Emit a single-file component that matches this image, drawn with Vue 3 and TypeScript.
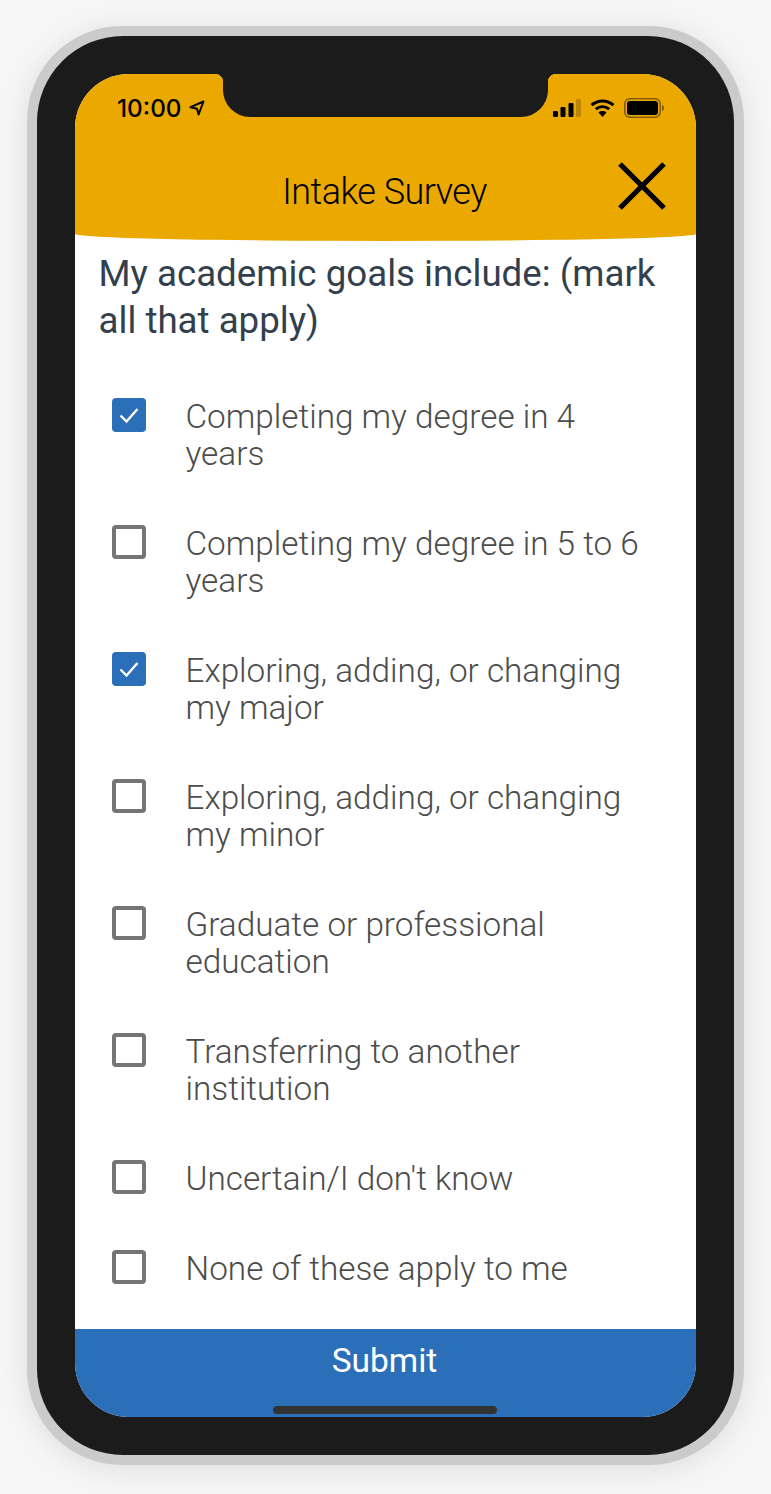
<script setup lang="ts">
interface Option { label: string; checked: boolean }
const options: Option[] = [
  { label: 'Completing my degree in 4 years', checked: true },
  { label: 'Completing my degree in 5 to 6 years', checked: false },
  { label: 'Exploring, adding, or changing my major', checked: true },
  { label: 'Exploring, adding, or changing my minor', checked: false },
  { label: 'Graduate or professional education', checked: false },
  { label: 'Transferring to another institution', checked: false },
  { label: "Uncertain/I don't know", checked: false },
  { label: 'None of these apply to me', checked: false },
]
</script>

<template>
  <div class="page">
    <div class="frame">
      <div class="bezel">
        <div class="screen">
          <header class="header">
            <div class="status">
              <div class="status-left">
                <span class="time">10:00</span>
                <svg class="loc" viewBox="0 0 16 16" width="16" height="16">
                  <path d="M1.5 7.2 14.5 1.5 9.6 14.5 8 8.8Z" fill="none" stroke="#000" stroke-width="2" stroke-linejoin="round" />
                </svg>
              </div>
              <div class="status-right">
                <svg viewBox="0 0 28 18" width="28" height="18">
                  <rect x="0" y="12" width="5" height="6" rx="1.2" fill="#000" />
                  <rect x="7.5" y="8" width="5" height="10" rx="1.2" fill="#000" />
                  <rect x="15.5" y="4" width="5" height="14" rx="1.2" fill="#000" />
                  <rect x="23" y="0" width="5" height="18" rx="1.2" fill="#000" opacity="0.2" />
                </svg>
                <svg viewBox="0 0 25 18" width="25" height="18">
                  <path d="M1.5 6.2C8 .6 17 .6 23.5 6.2" fill="none" stroke="#000" stroke-width="3" />
                  <path d="M5.8 10.2c4-3.4 9.400-3.400 13.400 0" fill="none" stroke="#000" stroke-width="3" />
                  <path d="M12.500 18 8.500 13.400c2.300-1.800 5.700-1.800 8 0Z" fill="#000" />
                </svg>
                <svg viewBox="0 0 40 20" width="40" height="20">
                  <rect x="0.800" y="0.800" width="35.400" height="18.400" rx="5" fill="none" stroke="#000" stroke-opacity="0.45" stroke-width="1.600" />
                  <rect x="3" y="3" width="31" height="14" rx="3" fill="#000" />
                  <path d="M38 7c1.500.5 2 1.800 2 3s-.5 2.500-2 3Z" fill="#000" fill-opacity="0.45" />
                </svg>
              </div>
            </div>
            <div class="title-row">
              <h1 class="title">Intake Survey</h1>
              <svg class="close" viewBox="0 0 48 48" width="48" height="48">
                <path d="M2 2 46 46M46 2 2 46" stroke="#000" stroke-width="5.200" fill="none" />
              </svg>
            </div>
          </header>

          <main class="body">
            <h2 class="question">My academic goals include: (mark all that apply)</h2>
            <ul class="options">
              <li v-for="o in options" :key="o.label" class="option">
                <span class="box" :class="{ checked: o.checked }">
                  <svg v-if="o.checked" viewBox="0 0 34 34" width="34" height="34">
                    <path d="M8.500 17.500 14.500 23.500 25.500 11" fill="none" stroke="#fff" stroke-width="2.400" />
                  </svg>
                </span>
                <span class="label">{{ o.label }}</span>
              </li>
            </ul>
          </main>

          <footer class="submit">
            <span class="submit-text">Submit</span>
            <span class="home"></span>
          </footer>

          <div class="notch"></div>
        </div>
      </div>
    </div>
  </div>
</template>

<style>
html, body { margin: 0; background: #f6f6f6; }
</style>

<style scoped>
.page {
  width: 771px;
  height: 1494px;
  box-sizing: border-box;
  padding: 26px 27px 29px;
  background: #f6f6f6;
  font-family: Roboto, "Liberation Sans", sans-serif;
}
.frame {
  height: 100%;
  box-sizing: border-box;
  padding: 10px;
  background: #cbcbcb;
  border-radius: 95px;
  box-shadow: 0 4px 30px rgba(0, 0, 0, 0.1);
}
.bezel {
  height: 100%;
  box-sizing: border-box;
  padding: 38px;
  background: #1b1b1b;
  border-radius: 86px;
}
.screen {
  position: relative;
  height: 100%;
  display: flex;
  flex-direction: column;
  background: #fff;
  border-radius: 54px;
  overflow: hidden;
}
.header {
  height: 167px;
  flex: none;
  background: #eba900;
  border-radius: 0 0 50% 50% / 0 0 7px 7px;
  display: flex;
  flex-direction: column;
}
.status {
  height: 44px;
  margin-top: 24px;
  padding: 0 32px 0 42px;
  display: flex;
  justify-content: space-between;
  align-items: flex-start;
}
.status-left { display: flex; align-items: center; gap: 7px; }
.time {
  font-family: Inter, Roboto, sans-serif;
  font-weight: 500;
  font-size: 24.300px;
  line-height: 20px;
  color: #000;
}
.status-right { display: flex; align-items: center; gap: 9px; height: 20px; }
.title-row {
  position: relative;
  flex: 1;
  display: flex;
  align-items: center;
  justify-content: center;
  padding-right: 2px;
}
.title {
  margin: 0;
  font-weight: 300;
  font-size: 36px;
  letter-spacing: -0.5px;
  line-height: 46px;
  color: #000;
}
.close {
  position: absolute;
  right: 30px;
  top: 20px;
}
.body {
  flex: 1;
  padding-top: 9px;
}
.question {
  margin: 0;
  padding: 0 24px 0 23.500px;
  font-weight: 400;
  font-size: 36.700px;
  line-height: 47px;
  color: #333f4d;
}
.options {
  list-style: none;
  margin: 0;
  padding: 54px 0 0 37px;
  display: flex;
  flex-direction: column;
  gap: 53px;
}
.option {
  display: flex;
  align-items: flex-start;
  gap: 39.500px;
  padding-right: 50px;
}
.box {
  flex: none;
  width: 34px;
  height: 34px;
  box-sizing: border-box;
  border: 4px solid #757575;
  border-radius: 4px;
  position: relative;
}
.box.checked {
  border: none;
  background: #2b6fb8;
}
.box svg { display: block; }
.label {
  font-weight: 300;
  font-size: 33.300px;
  line-height: 37px;
  color: #4c4c4c;
}
.submit {
  position: relative;
  flex: none;
  height: 88px;
  background: #2b6fb8;
  display: flex;
  justify-content: center;
  padding-right: 2px;
}
.submit-text {
  font-size: 33.500px;
  line-height: 63px;
  color: #fff;
}
.home {
  position: absolute;
  left: 198px;
  bottom: 3px;
  width: 224px;
  height: 8px;
  border-radius: 4px;
  background: #333;
}
.notch {
  position: absolute;
  top: 0;
  left: 148px;
  width: 325px;
  height: 43px;
  background: #1b1b1b;
  border-radius: 0 0 27px 27px;
}
.notch::before, .notch::after {
  content: "";
  position: absolute;
  top: 0;
  width: 8px;
  height: 8px;
}
.notch::before {
  left: -8px;
  background: radial-gradient(circle at 0 100%, transparent 8px, #1b1b1b 8.500px);
}
.notch::after {
  right: -8px;
  background: radial-gradient(circle at 100% 100%, transparent 8px, #1b1b1b 8.500px);
}
</style>
